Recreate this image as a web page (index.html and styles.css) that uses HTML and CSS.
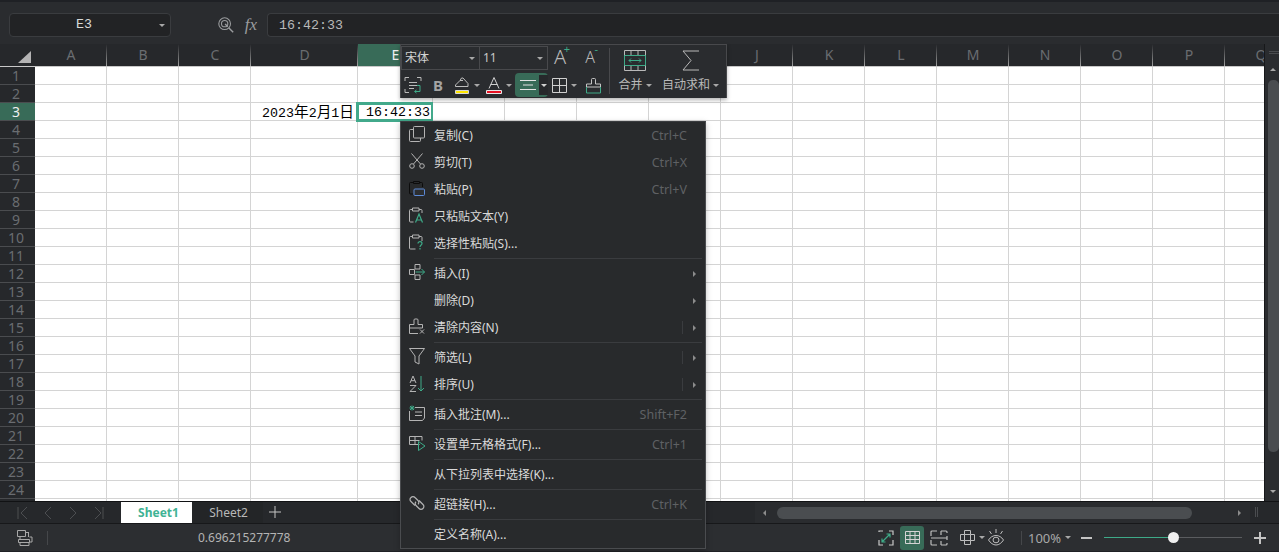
FILE: index.html
```html
<!DOCTYPE html>
<html lang="zh-CN">
<head>
	<meta charset="UTF-8">
	<title>Sheet1</title>
	<link rel="stylesheet" href="styles.css">
</head>
<body>
<div class="app">
	<!-- 编辑栏 -->
	<div class="formulaBar">
		<div class="nameBox"><span>E3</span><i class="caret"></i></div>
		<svg class="fbIcon" width="18" height="18" viewBox="0 0 20 20" fill="none" stroke="#9a9c9e" stroke-width="1.2"><circle cx="8.5" cy="8.5" r="6.5"/><circle cx="8.5" cy="8.5" r="3.5"/><path d="M9 9l3 3M13 13l5 5" stroke-width="1.6"/></svg>
		<span class="fx">fx</span>
		<div class="formulaInput">16:42:33</div>
	</div>

	<!-- 表格区 -->
	<div class="sheet">
		<div class="gridWrap">
			<div class="colHeads">
				<div class="corner"><i></i></div>
				<div class="ch">A</div><div class="ch">B</div><div class="ch">C</div><div class="ch wD">D</div><div class="ch wE on">E</div>
				<div class="ch">F</div><div class="ch">G</div><div class="ch">H</div><div class="ch">I</div><div class="ch">J</div><div class="ch">K</div>
				<div class="ch">L</div><div class="ch">M</div><div class="ch">N</div><div class="ch">O</div><div class="ch">P</div><div class="ch">Q</div>
			</div>
			<div class="body">
				<div class="rowHeads">
					<div class="rh">1</div><div class="rh">2</div><div class="rh on">3</div><div class="rh">4</div><div class="rh">5</div><div class="rh">6</div>
					<div class="rh">7</div><div class="rh">8</div><div class="rh">9</div><div class="rh">10</div><div class="rh">11</div><div class="rh">12</div>
					<div class="rh">13</div><div class="rh">14</div><div class="rh">15</div><div class="rh">16</div><div class="rh">17</div><div class="rh">18</div>
					<div class="rh">19</div><div class="rh">20</div><div class="rh">21</div><div class="rh">22</div><div class="rh">23</div><div class="rh">24</div>
				</div>
				<div class="col"></div><div class="col"></div><div class="col"></div>
				<div class="col wD"><div class="val right">2023<span class="cjk">年</span>2<span class="cjk">月</span>1<span class="cjk">日</span></div></div>
				<div class="col wE"><div class="val time">16:42:33</div><div class="selBox"></div></div>
				<div class="col"></div><div class="col"></div><div class="col"></div><div class="col"></div><div class="col"></div><div class="col"></div>
				<div class="col"></div><div class="col"></div><div class="col"></div><div class="col"></div><div class="col"></div><div class="col"></div>
			</div>
		</div>
		<div class="vScroll">
			<i class="grip"></i>
			<i class="arrowUp"></i>
			<div class="vThumb"></div>
			<i class="caret"></i>
		</div>
	</div>

	<!-- 工作表标签 -->
	<div class="tabBar">
		<div class="tabNav">
			<svg width="120" height="22" viewBox="0 0 120 22" fill="none" stroke="#4c4e51" stroke-width="1"><path d="M18 5v12M27 5l-6 6 6 6M51 5l-6 6 6 6M70 5l6 6-6 6M95 5l6 6-6 6M103 5v12"/></svg>
		</div>
		<div class="tab active">Sheet1</div>
		<div class="tab">Sheet2</div>
		<svg class="addTab" width="14" height="14" viewBox="0 0 14 14" stroke="#c4c4c4" stroke-width="1"><path d="M7 1v12M1 7h12"/></svg>
		<div class="hScroll">
			<i class="arrowL"></i>
			<div class="hThumb"></div>
			<i class="arrowR"></i>
		</div>
		<i class="hGrip"></i>
	</div>

	<!-- 状态栏 -->
	<div class="statusBar">
		<svg class="stIcon" width="18" height="18" viewBox="0 0 18 18" fill="none" stroke="#a8a8a8"><path d="M1.5 1.5h8v6h-8zM9.5 3.5h3M12.5 3v5M4 7.5v3M2.500 10.500h11v3h-11zM4 13.500v3h9v-3M13.500 8h2.500v5h-2.500"/></svg>
		<i class="stDiv"></i>
		<span class="stVal">0.696215277778</span>
		<div class="stRight">
			<svg width="18" height="18" viewBox="0 0 18 18" fill="none" stroke="#c8c8c8" stroke-width="1.2"><path d="M6 2H2v1M2 11v5h4M12 16h4v-5M12 2h4v4"/><path d="M5 13L13 5M9.500 5H13v3.500M5 9.500V13h3.500" stroke="#3eaa88"/></svg>
			<div class="stOn"><svg width="17" height="15" viewBox="0 0 17 15" fill="none" stroke="#d4d4d4"><path d="M1.500 1.500h14v12h-14zM1.500 5.500h14M1.500 9.500h14M6 1.500v12M11 1.500v12"/></svg></div>
			<svg width="18" height="16" viewBox="0 0 18 16" fill="none" stroke="#bdbdbd" stroke-width="1.2"><path d="M7 1H2a1 1 0 0 0-1 1v4M1 10v4a1 1 0 0 0 1 1h5M11 1h5a1 1 0 0 1 1 1v1M17 13v1a1 1 0 0 1-1 1h-5M1 8h16M11 1v4M11 11v4M17 6v4"/></svg>
			<div class="stCaret"><svg width="17" height="17" viewBox="0 0 17 17" fill="none" stroke="#bdbdbd"><path d="M5.500 1.500h6v4h4v6h-4v4h-6v-4h-4v-6h4zM5.500 5.500h6v6h-6z"/></svg><i class="caret"></i></div>
			<svg class="eye" width="18" height="17" viewBox="0 0 18 17" fill="none" stroke="#bdbdbd"><path d="M1.500 11c2-3 4.500-4.500 7.500-4.500s5.500 1.500 7.500 4.500c-2 3-4.500 5-7.500 5s-5.500-2-7.500-5z"/><ellipse cx="9" cy="11" rx="3" ry="2.800"/><path d="M2.500 2l2 3M9 0v4M15.500 2l-2 3"/></svg>
			<i class="stDiv2"></i>
			<div class="zoomVal">100%<i class="caret"></i></div>
			<i class="minus"></i>
			<div class="slider"><div class="sliderOn"></div><div class="knob"></div></div>
			<svg class="plus" width="12" height="12" viewBox="0 0 12 12" stroke="#c4c4c4" stroke-width="2"><path d="M6 0v12M0 6h12"/></svg>
		</div>
	</div>

	<!-- 浮动工具栏 -->
	<div class="miniBar">
		<div class="miniLeft">
			<div class="miniRow">
				<div class="combo fontName">宋体<i class="caret"></i></div>
				<div class="combo fontSize">11<i class="caret"></i></div>
				<div class="fontBtn inc"><span class="big">A</span><b>+</b></div>
				<div class="fontBtn dec"><span class="small">A</span><b>-</b></div>
			</div>
			<div class="miniRow tools">
				<svg width="18" height="18" viewBox="0 0 18 18" fill="none" stroke="#b9b9b9"><path d="M1 5V1.500h4M13 1.500h4V5M1 13v3.500h4M5 6.500h8M5 9.500h8M5 12.500h5"/><path d="M13 9.500h3v6h-5M12.500 14l-2 1.500 2 1.500" stroke="#3eaa88"/></svg>
				<span class="bold">B</span>
				<div class="toolCaret"><svg width="18" height="19" viewBox="0 0 18 19" fill="none" stroke="#bdbdbd"><path d="M2.500 9L7 4.500l1.500-2.500h1.500l5 5.500v3H2.500z"/><path d="M7 4.500h3"/><path d="M2.500 14.500h13v3h-13z" fill="#ffe600" stroke="#d8d8d8"/></svg><i class="caret"></i></div>
				<div class="toolCaret"><svg width="18" height="19" viewBox="0 0 18 19" fill="none" stroke="#d0d0d0"><path d="M4 12.500L9 1.500l5 11M5.500 8.500h7"/><path d="M1.500 14.500h15v3h-15z" fill="#e81123" stroke="#e8e8e8"/></svg><i class="caret"></i></div>
				<div class="alignBtn"><svg width="16" height="12" viewBox="0 0 16 12" stroke="#e4e4e4"><path d="M0 1.500h16M3 6h10M0 10.500h16"/></svg><span class="alignDrop"><i class="caret"></i></span></div>
				<div class="toolCaret"><svg width="17" height="17" viewBox="0 0 17 17" fill="none" stroke="#d0d0d0"><path d="M1.500 1.500h14v14h-14zM8.500 1.500v14M1.500 8.500h14"/></svg><i class="caret"></i></div>
				<svg width="17" height="17" viewBox="0 0 17 17" fill="none" stroke="#c4c4c4"><path d="M6.500 7V2.500a1 1 0 0 1 1-1h2a1 1 0 0 1 1 1V7h5v3H1.500V7z"/><path d="M1.500 10v6h14v-6" stroke="#3eaa88"/></svg>
			</div>
		</div>
		<i class="miniDiv"></i>
		<div class="bigBtn">
			<svg width="22" height="21" viewBox="0 0 22 21" fill="none" stroke="#b9b9b9"><path d="M.5.500h21v20H.500zM.5 5.500h21M.5 15.500h21M7 .5v5M14 .5v5M7 15.500v5M14 15.500v5"/><path d="M.5 5.500h21v10H.500z" stroke="#3eaa88"/><path d="M5 10.500h12M7 8.500l-2 2 2 2M15 8.500l2 2-2 2" stroke="#3eaa88"/></svg>
			<span>合并<i class="caret"></i></span>
		</div>
		<div class="bigBtn sum">
			<svg width="18" height="21" viewBox="0 0 18 21" fill="none" stroke="#b9b9b9"><path d="M17 1H1l8 9.500L1 20h16"/></svg>
			<span>自动求和<i class="caret"></i></span>
		</div>
	</div>

	<!-- 右键菜单 -->
	<div class="contextMenu">
		<ul>
			<li><svg width="16" height="16" viewBox="0 0 16 16" fill="none" stroke="#b4b4b4"><path d="M4.500 1.500a1 1 0 0 1 1-1h9a1 1 0 0 1 1 1v9.500a1 1 0 0 1-1 1h-9a1 1 0 0 1-1-1z"/><path d="M4.500 3.500h-3a1 1 0 0 0-1 1v10a1 1 0 0 0 1 1h9a1 1 0 0 0 1-1V12"/></svg>复制(C)<span class="key">Ctrl+C</span></li>
			<li><svg width="16" height="16" viewBox="0 0 16 16" fill="none" stroke="#b4b4b4"><circle cx="3" cy="13" r="2.300"/><circle cx="13" cy="13" r="2.300"/><path d="M4.500 11L13.500.5M11.500 11L2.500.5"/></svg>剪切(T)<span class="key">Ctrl+X</span></li>
			<li><svg width="16" height="16" viewBox="0 0 16 16" fill="none"><path d="M4 2.500H1.500a1 1 0 0 0-1 1V13a1 1 0 0 0 1 1H4M11 2.500h1.500a1 1 0 0 1 1 1V7M4.500 1.500h6v2h-6z" stroke="#0c0c0c"/><rect x="5" y="9" width="10.500" height="6.500" rx="1" fill="#2c2e30" stroke="#5d8bd8"/></svg>粘贴(P)<span class="key">Ctrl+V</span></li>
			<li><svg width="16" height="16" viewBox="0 0 16 16" fill="none" stroke="#b4b4b4"><path d="M3.500 2.500h-2a1 1 0 0 0-1 1V14a1 1 0 0 0 1 1h3M10 2.500h2a1 1 0 0 1 1 1V6M3.500 1h6.500v3H3.500z"/><path d="M6.500 15.500L10 7l3.500 8.500M7.700 13h4.600" stroke="#3eaa88" stroke-width="1.200"/></svg>只粘贴文本(Y)</li>
			<li class="sep"><svg width="16" height="16" viewBox="0 0 16 16" fill="none" stroke="#b4b4b4"><path d="M3.500 2.500h-2a1 1 0 0 0-1 1V14a1 1 0 0 0 1 1h5M10 2.500h2a1 1 0 0 1 1 1V7M3.500 1h6.500v3H3.500z"/><path d="M9 9.500c0-2.500 4-2.500 4 0 0 1.500-2 1.500-2 3.500M11 14v1.500" stroke="#3eaa88" stroke-width="1.200"/></svg>选择性粘贴(S)...</li>
			<li class="has"><svg width="16" height="16" viewBox="0 0 16 16" fill="none" stroke="#b4b4b4"><path d="M.5 5.500h5v5h-5zM6 .5h5v4.500H6zM6 11h5v4.500H6z"/><path d="M6.500 8h9M12.500 5l3 3-3 3" stroke="#3eaa88"/></svg>插入(I)<i class="sub"></i></li>
			<li class="has noIcon">删除(D)<i class="sub"></i></li>
			<li class="has sep"><svg width="16" height="16" viewBox="0 0 16 16" fill="none" stroke="#b4b4b4"><path d="M5 6.500V2a1 1 0 0 1 1-1h2a1 1 0 0 1 1 1v4.500h4.500v3.500H.5V6.500zM.5 10v5.500H9"/><path d="M11 11.500l4 4M15 11.500l-4 4"/></svg>清除内容(N)<i class="bar"></i><i class="sub"></i></li>
			<li class="has"><svg width="16" height="17" viewBox="0 0 16 17" fill="none" stroke="#b4b4b4"><path d="M.5.500h15L10 8v8l-4-2V8z"/></svg>筛选(L)<i class="bar"></i><i class="sub"></i></li>
			<li class="has sep"><svg width="16" height="17" viewBox="0 0 16 17" fill="none"><path d="M1 8l3-7 3 7M2 5.700h4M1 10.500h6l-6 6h6" stroke="#b4b4b4"/><path d="M12 1v15M9 13l3 3 3-3" stroke="#3eaa88"/></svg>排序(U)<i class="bar"></i><i class="sub"></i></li>
			<li class="sep"><svg width="16" height="16" viewBox="0 0 16 16" fill="none"><path d="M6 2.500h9.500v10.500l-2 2.500H.5V6" stroke="#b4b4b4"/><path d="M6 7h7M6 10.500h7" stroke="#b4b4b4"/><path d="M3 .5v5M.5 3h5M1 1l4 4M5 1L1 5" stroke="#3eaa88"/></svg>插入批注(M)...<span class="key">Shift+F2</span></li>
			<li class="sep"><svg width="16" height="16" viewBox="0 0 16 16" fill="none"><path d="M10.500 9.500H.5v-8h12.500v4M.5 5.500h10M6 1.500v8" stroke="#b4b4b4"/><path d="M9.500 6.500v9L16 11z" stroke="#3eaa88"/></svg>设置单元格格式(F)...<span class="key">Ctrl+1</span></li>
			<li class="sep noIcon">从下拉列表中选择(K)...</li>
			<li class="sep"><svg width="16" height="16" viewBox="0 0 16 16" fill="none" stroke="#b4b4b4" stroke-width="1.200"><path d="M6 10.500L2 6.500a2.500 2.500 0 0 1 0-4 2.700 2.700 0 0 1 4 0l3 3a2.600 2.600 0 0 1 0 3.800"/><path d="M10 5.500l4 4a2.700 2.700 0 0 1 0 4 2.700 2.700 0 0 1-4 0l-3-3a2.600 2.600 0 0 1 0-3.800"/></svg>超链接(H)...<span class="key">Ctrl+K</span></li>
			<li class="noIcon">定义名称(A)...</li>
		</ul>
	</div>
</div>
</body>
</html>
```

FILE: styles.css
```css
*{box-sizing:border-box;}
html,body{margin:0;padding:0;}
body{width:1279px;height:552px;overflow:hidden;background:#2a2c2f;font-family:"Noto Sans","Noto Sans CJK SC",sans-serif;font-size:12px;}
ul{list-style:none;padding:0;margin:0;}
i{display:block;font-style:normal;}
svg{display:block;flex:none;}
.caret{width:0;height:0;border:3px solid transparent;border-top:3px solid #a8a8a8;border-bottom:0;}

.app{position:relative;display:flex;flex-direction:column;width:1279px;height:552px;}

/* 编辑栏 */
.formulaBar{display:flex;align-items:center;height:44px;padding:5px 0 2px 9px;background:#2a2c2f;border-top:2px solid #1f2125;}
.nameBox{position:relative;display:flex;align-items:center;justify-content:center;width:162px;height:24px;padding-right:12px;background:#222325;border:1px solid #3a3c3f;border-radius:4px;color:#d8d8d8;font:13.33px "Liberation Mono",monospace;}
.nameBox .caret{position:absolute;right:5px;top:10px;}
.fbIcon{margin-left:46px;}
.fx{width:32px;text-align:center;color:#9a9c9e;font:italic 17px "Liberation Serif",serif;}
.formulaInput{flex:1;height:24px;padding:0 11px;background:#222325;border:1px solid #3a3c3f;border-right:0;border-radius:4px 0 0 4px;color:#b9b9b9;font:13.33px/23px "Liberation Mono",monospace;}

/* 表格 */
.sheet{display:flex;height:457px;}
.gridWrap{width:1264px;overflow:hidden;background:#fff;}
.colHeads{display:flex;height:23px;background:#26282b;border-bottom:1px solid #c8c8c8;}
.corner{position:relative;flex:none;width:35px;}
.corner i{position:absolute;right:4px;bottom:3px;width:0;height:0;border-style:solid;border-width:0 0 12px 13px;border-color:transparent transparent #b4b4b4 transparent;}
.ch{flex:none;width:72px;text-align:center;font-size:14px;line-height:22px;color:#6a6d71;background:linear-gradient(to bottom,#26282b,#a0a0a0) right top/1px 100% no-repeat;}
.ch.wD,.col.wD{width:107px;}
.ch.wE,.col.wE{width:75px;}
.ch.on{background:#386b58;color:#f0f0f0;}
.body{display:flex;height:434px;}
.rowHeads{flex:none;width:35px;background:#26282b;}
.rh{height:18px;text-align:center;padding-right:3px;font-size:14px;line-height:18px;color:#6a6d71;border-bottom:1px solid #4a4c4f;}
.rh.on{background:#386b58;color:#f0f0f0;}
.col{position:relative;flex:none;width:72px;border-right:1px solid #d4d4d4;background:repeating-linear-gradient(to bottom,#fff 0,#fff 17px,#d4d4d4 17px,#d4d4d4 18px);}
.val{height:18px;margin-top:36px;font:13.33px/20px "Liberation Mono","Noto Sans CJK SC",monospace;color:#000;white-space:nowrap;}
.val .cjk{font-size:14.67px;}
.val.right{text-align:right;padding-right:3px;}
.val.time{padding-left:8px;}
.selBox{position:absolute;left:-2px;top:35px;width:78px;height:20px;border:3px solid #42a98b;}

.vScroll{position:relative;flex:none;width:15px;background:#2a2c2f;border-left:1px solid #17181a;}
.vScroll .grip{position:absolute;left:4px;top:7px;width:10px;height:3px;border:1px solid #4a4c4f;border-width:1px 0;}
.vScroll .arrowUp{position:absolute;left:5px;top:24px;width:0;height:0;border:3px solid transparent;border-bottom:3px solid #a8a8a8;border-top:0;}
.vThumb{position:absolute;left:3px;top:36px;width:11px;height:372px;background:#4a4d50;border-radius:5px;}
.vScroll .caret{position:absolute;left:5px;bottom:8px;}

/* 标签栏 */
.tabBar{position:relative;display:flex;align-items:stretch;height:23px;background:#26282b;border-top:1px solid #111214;border-bottom:1px solid #17181a;}
.tabNav{width:121px;}
.tab{width:71px;text-align:center;line-height:21px;padding-left:2px;background:#232527;color:#b8b8b8;font-size:12px;}
.tab.active{padding-left:4px;background:#fff;color:#3fb394;font-weight:700;}
.addTab{margin:3px 0 0 5px;}
.hScroll{position:absolute;left:755px;top:0;width:495px;height:21px;display:flex;align-items:center;background:#2a2c2f;}
.arrowL{margin-left:8px;width:0;height:0;border:3px solid transparent;border-right:3px solid #8c8c8c;border-left:0;}
.hThumb{margin-left:11px;width:415px;height:12px;background:#4a4d50;border-radius:6px;}
.arrowR{margin-left:46px;width:0;height:0;border:3px solid transparent;border-left:3px solid #8c8c8c;border-right:0;}
.hGrip{position:absolute;left:1255px;top:5px;width:3px;height:10px;border:1px solid #4a4c4f;border-width:0 1px;}

/* 状态栏 */
.statusBar{position:relative;display:flex;align-items:center;height:28px;background:#2c2e31;border-bottom:1px solid #1f2125;padding-left:16px;}
.stDiv{width:1px;height:14px;margin-left:13px;background:#45474a;}
.stVal{margin-left:150px;color:#b4b4b4;font-size:12px;}
.stRight{position:absolute;left:877px;top:0;height:27px;display:flex;align-items:center;}
.stOn{display:flex;align-items:center;justify-content:center;width:24px;height:24px;margin-left:5px;background:#386b58;border-radius:3px;}
.stOn + svg{margin-left:6px;}
.stCaret{display:flex;align-items:center;gap:3px;margin-left:11px;}
.eye{margin-left:2px;}
.stDiv2{width:1px;height:14px;margin-left:16px;background:#45474a;}
.zoomVal{display:flex;align-items:center;gap:4px;margin-left:6px;color:#a8a8a8;font-size:13px;}
.minus{width:11px;height:2px;margin-left:10px;background:#c4c4c4;}
.slider{position:relative;width:138px;height:1px;margin-left:12px;background:#5a5c5f;}
.sliderOn{width:69px;height:1px;background:#3eaa88;}
.knob{position:absolute;left:64px;top:-5px;width:11px;height:11px;border-radius:50%;background:#f0f0f0;}
.plus{margin-left:12px;}

/* 浮动工具栏 */
.miniBar{position:absolute;left:400px;top:44px;display:flex;width:327px;height:54px;background:#2a2c2f;border:1px solid #48494c;border-width:1px 1px 0 1px;box-shadow:0 2px 4px rgba(0,0,0,.3);}
.miniLeft{flex:none;width:208px;padding-top:1px;}
.miniRow{display:flex;align-items:center;height:24px;}
.combo{position:relative;height:24px;padding-left:3px;line-height:22px;border:1px solid #48494c;color:#d4d4d4;font-size:12px;}
.combo .caret{position:absolute;right:4px;top:10px;}
.fontName{width:79px;}
.fontSize{width:69px;margin-left:-1px;color:#c8c8c8;}
.fontBtn{position:relative;width:30px;padding-right:6px;text-align:center;color:#b9b9b9;line-height:24px;font-weight:300;}
.fontBtn .big{font-size:20px;}
.fontBtn .small{font-size:16px;}
.fontBtn b{position:absolute;right:8px;top:-3px;color:#3eaa88;font-weight:400;font-size:11px;line-height:14px;}
.fontBtn.dec b{right:10px;}
.tools{height:28px;margin-top:1px;padding-left:3px;}
.bold{width:16px;margin-left:8px;font-weight:700;font-size:15px;text-align:center;color:#a4a4a4;}
.toolCaret{display:flex;align-items:center;gap:3px;margin-left:7px;}
.toolCaret + .toolCaret{margin-left:5px;}
.alignBtn{flex:none;display:flex;align-items:center;width:33px;height:24px;margin-left:3px;padding-left:5px;background:#386b58;border-radius:4px;}
.alignDrop{display:flex;align-items:center;justify-content:center;width:9px;height:20px;margin-left:3px;background:#26282b;}
.alignDrop .caret{border-top-color:#d0d0d0;}
.alignBtn + .toolCaret{margin-left:3px;}
.tools > svg:last-child{margin-left:8px;}
.miniDiv{flex:none;width:1px;height:46px;margin-top:3px;background:#48494c;}
.bigBtn{flex:none;display:flex;flex-direction:column;align-items:center;width:50px;padding-top:5px;color:#b9b9b9;}
.bigBtn.sum{width:61px;}
.bigBtn span{display:flex;align-items:center;gap:3px;margin-top:6px;line-height:16px;white-space:nowrap;}

/* 右键菜单 */
.contextMenu{position:absolute;left:400px;top:121px;width:306px;height:428px;background:#282a2c;border:1px solid #4a4c4f;border-top-color:#3a3c3f;box-shadow:0 2px 6px rgba(0,0,0,.25);}
.contextMenu li{position:relative;display:flex;align-items:center;height:27px;padding-left:33px;color:#dadada;line-height:27px;white-space:nowrap;}
.contextMenu li > svg{position:absolute;left:8px;top:4px;}
.contextMenu li.sep{height:30px;padding-bottom:3px;}
.contextMenu li.sep::after{content:"";position:absolute;left:33px;right:3px;bottom:1px;height:1px;background:#3a3c3f;}
.contextMenu li .key{position:absolute;right:18px;top:0;color:#5f6164;font-size:12.5px;}
.sub{position:absolute;right:9px;top:11px;width:0;height:0;border:3px solid transparent;border-left:3px solid #8c8c8c;border-right:0;}
.bar{position:absolute;right:22px;top:7px;width:1px;height:13px;background:#3a3c3f;}
```
